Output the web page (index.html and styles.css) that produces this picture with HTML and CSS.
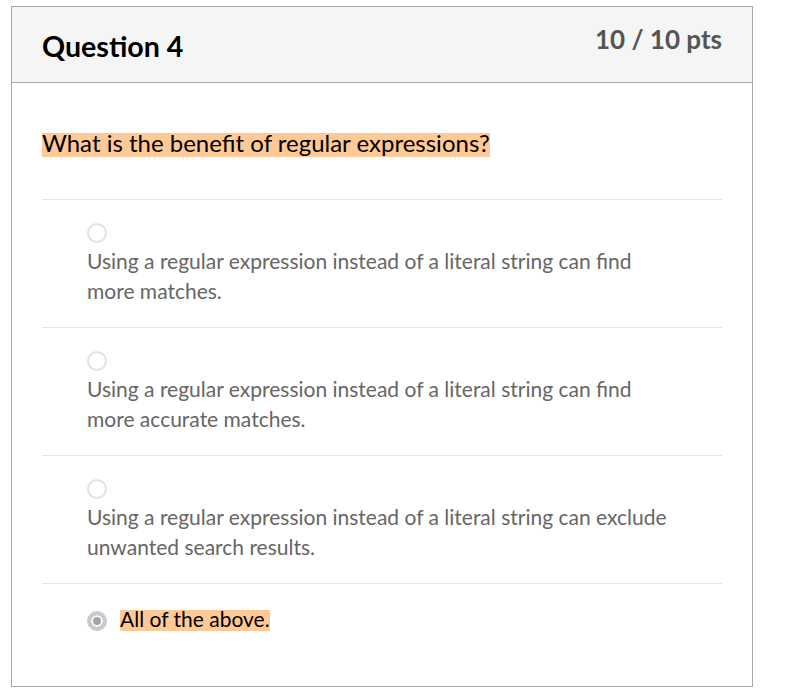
FILE: index.html
```html
<!DOCTYPE html>
<html>
<head>
<meta charset="utf-8">
<link rel="stylesheet" href="styles.css">
</head>
<body>
<div class="card">
  <div class="card-header">
    <h2 class="q-title">Question 4</h2>
    <div class="q-points">10 / 10 pts</div>
  </div>
  <div class="card-body">
    <p class="q-text"><span class="hl">What is the benefit of regular expressions?</span></p>
    <div class="answers">
      <div class="answer">
        <span class="radio"></span>
        <div class="answer-text">Using a regular expression instead of a literal string can find more matches.</div>
      </div>
      <div class="answer">
        <span class="radio"></span>
        <div class="answer-text">Using a regular expression instead of a literal string can find more accurate matches.</div>
      </div>
      <div class="answer">
        <span class="radio"></span>
        <div class="answer-text">Using a regular expression instead of a literal string can exclude unwanted search results.</div>
      </div>
      <div class="answer selected">
        <span class="radio checked"></span>
        <div class="answer-text"><span class="hl">All of the above.</span></div>
      </div>
    </div>
  </div>
</div>
</body>
</html>
```

FILE: styles.css
```css
html, body {
  margin: 0;
  padding: 0;
  background: #ffffff;
}
body {
  font-family: Lato, "Open Sans", sans-serif;
  padding: 6px 0 0 11px;
}
.card {
  width: 740px;
  height: 679px;
  border: 1px solid #a9a9a9;
  box-sizing: content-box;
  display: flex;
  flex-direction: column;
}
.card-header {
  background: #f5f5f5;
  border-bottom: 1px solid #a9a9a9;
  height: 76px;
  box-sizing: border-box;
  display: flex;
  justify-content: space-between;
  align-items: flex-start;
  padding: 0 30px 0 30px;
  flex: none;
}
.q-title {
  margin: 0;
  font-size: 28.6px;
  font-weight: 700;
  color: #000;
  line-height: 34px;
  padding-top: 22px;
}
.q-points {
  font-size: 26px;
  font-weight: 700;
  color: #555555;
  line-height: 30px;
  padding-top: 17px;
}
.card-body {
  padding: 0 30px;
}
.q-text {
  display: flex;
  margin: 50px 0 0 0;
  font-size: 24px;
  color: #000;
}
.q-text .hl {
  line-height: 20px;
  padding-bottom: 4px;
}
.hl {
  background: #ffc996;
}
.answers {
  margin-top: 42px;
}
.answer {
  border-top: 1px solid #e6e6e6;
  padding: 23px 0 21px 45px;
  font-size: 21px;
  line-height: 30px;
  color: #666666;
}
.answer-text {
  max-width: 584px;
}
.answer .radio {
  display: block;
  width: 20px;
  height: 20px;
  box-sizing: border-box;
  border: 2px solid #e1e1e6;
  border-radius: 50%;
  margin-bottom: 3px;
}
.answer.selected {
  display: flex;
  align-items: center;
  gap: 13px;
  padding-top: 26px;
  color: #000;
}
.answer.selected .radio {
  margin: 0;
  flex: none;
}
.radio.checked {
  border: 4px solid #c9c9d0;
  background: #a3a3ac;
  box-shadow: inset 0 0 0 2px #ffffff;
}
.answer.selected .answer-text {
  display: flex;
}
.answer.selected .hl {
  line-height: 18px;
  padding-bottom: 3px;
}
```
